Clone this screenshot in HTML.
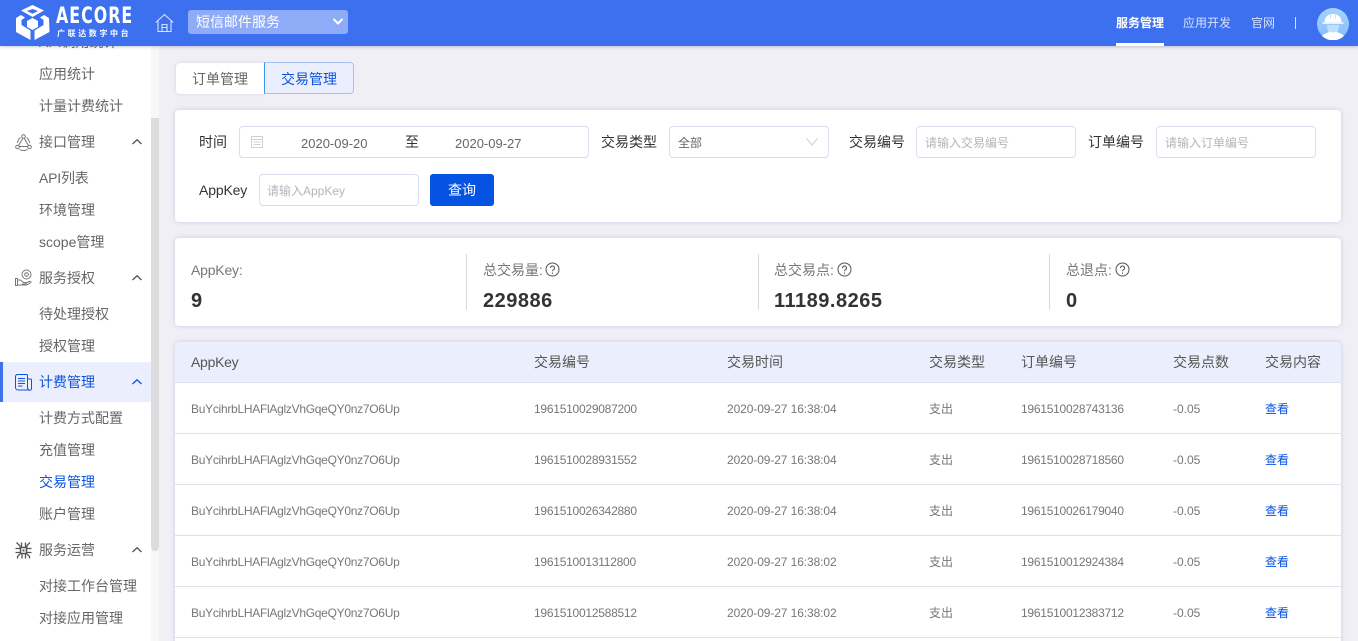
<!DOCTYPE html>
<html lang="zh"><head><meta charset="utf-8"><title>交易管理</title>
<style>
html,body{margin:0;padding:0;width:1358px;height:641px;overflow:hidden;background:#f0eff5}
body{position:relative;font-family:"Liberation Sans","Noto Sans CJK SC",sans-serif;font-size:14px;color:#666}
.a,.t{position:absolute}
.t{white-space:nowrap;line-height:20px}
.side{position:absolute;left:0;top:46px;width:151px;height:595px;background:#fff;overflow:hidden}
.m{position:absolute;left:39px;white-space:nowrap;line-height:20px;color:#666}
.card{position:absolute;background:#fff;border-radius:4px;box-shadow:0 0 4px rgba(140,145,210,.4)}
.inp{position:absolute;box-sizing:border-box;height:32px;border:1px solid #dcdcec;border-radius:4px;background:#fff;font-size:12px;color:#b4b4bc;line-height:32px;padding-left:8px;white-space:nowrap}
.lbl{position:absolute;white-space:nowrap;line-height:20px;color:#333;font-size:14px}
.h{position:absolute;top:352px;line-height:20px;color:#555;white-space:nowrap}
.c{position:absolute;font-size:12px;line-height:18px;color:#777;white-space:nowrap}
.ak{letter-spacing:-.28px}
.n{letter-spacing:-.25px}
.d{letter-spacing:-.1px}
.line{position:absolute;left:175px;width:1166px;height:1px;background:#e0e0ea}
.k{position:absolute;font-size:14px;line-height:20px;color:#777;white-space:nowrap;top:260px}
.v{position:absolute;font-size:20px;font-weight:bold;letter-spacing:.5px;line-height:26px;color:#333;white-space:nowrap;top:288px}
</style></head><body>

<!-- main cards -->
<div class="a" style="left:176px;top:63px;width:88px;height:31px;background:#fff;border-radius:4px 0 0 4px;box-shadow:0 0 3px rgba(140,145,210,.3);font-size:14px;line-height:32px;text-align:center;color:#666">订单管理</div>
<div class="a" style="left:264px;top:62px;width:90px;height:32px;box-sizing:border-box;background:#ebeefc;border:1px solid #a8c0f4;border-left-color:#3b95ee;border-radius:0 4px 4px 0;font-size:14px;line-height:32px;text-align:center;color:#0a55e0">交易管理</div>

<div class="card" style="left:175px;top:110px;width:1166px;height:112px"></div>
<div class="lbl" style="left:199px;top:132px">时间</div>
<div class="inp" style="left:239px;top:126px;width:350px"></div>
<svg class="a" style="left:250px;top:135px" width="14" height="14" viewBox="0 0 14 14" fill="none" stroke="#d0d0da"><rect x="1.500" y="1.500" width="11" height="11"/><path d="M1.500 4.500h11M3.500 7h7M3.500 9.500h7"/></svg>
<div class="t" style="left:301px;top:134px;font-size:13px;color:#666">2020-09-20</div>
<div class="lbl" style="left:405px;top:132px">至</div>
<div class="t" style="left:455px;top:134px;font-size:13px;color:#666">2020-09-27</div>
<div class="lbl" style="left:601px;top:132px">交易类型</div>
<div class="inp" style="left:669px;top:126px;width:160px;color:#666">全部</div>
<svg class="a" style="left:805px;top:137px" width="14" height="10" viewBox="0 0 14 10" fill="none" stroke="#cfcfd8"><path d="M1.500 1.500L7 8l5.500-6.500"/></svg>
<div class="lbl" style="left:849px;top:132px">交易编号</div>
<div class="inp" style="left:916px;top:126px;width:160px">请输入交易编号</div>
<div class="lbl" style="left:1088px;top:132px">订单编号</div>
<div class="inp" style="left:1156px;top:126px;width:160px">请输入订单编号</div>
<div class="lbl" style="left:199px;top:180px;letter-spacing:-.15px">AppKey</div>
<div class="inp" style="left:259px;top:174px;width:160px;padding-left:7px">请输入AppKey</div>
<div class="a" style="left:430px;top:174px;width:64px;height:32px;background:#0553e2;border-radius:3px;color:#fff;text-align:center;line-height:32px">查询</div>

<div class="card" style="left:175px;top:238px;width:1166px;height:88px"></div>
<div class="k" style="left:191px;letter-spacing:-.2px">AppKey:</div><div class="v" style="left:191px">9</div>
<div class="a" style="left:466px;top:254px;width:1px;height:56px;background:#d8d8de"></div>
<div class="k" style="left:483px">总交易量:</div><div class="v" style="left:483px">229886</div>
<div class="a" style="left:758px;top:254px;width:1px;height:56px;background:#d8d8de"></div>
<div class="k" style="left:774px">总交易点:</div><div class="v" style="left:774px">11189.8265</div>
<div class="a" style="left:1049px;top:254px;width:1px;height:56px;background:#d8d8de"></div>
<div class="k" style="left:1066px">总退点:</div><div class="v" style="left:1066px">0</div>
<svg class="a" style="left:545px;top:262px" width="15" height="15" viewBox="0 0 15 15" fill="none" stroke="#555"><circle cx="7.500" cy="7.500" r="6.500"/><path d="M5.500 6a2 2 0 1 1 3 1.700c-.7.400-1 .8-1 1.600M7.500 10.500v1.200"/></svg>
<svg class="a" style="left:837px;top:262px" width="15" height="15" viewBox="0 0 15 15" fill="none" stroke="#555"><circle cx="7.500" cy="7.500" r="6.500"/><path d="M5.500 6a2 2 0 1 1 3 1.700c-.7.400-1 .8-1 1.600M7.500 10.500v1.200"/></svg>
<svg class="a" style="left:1115px;top:262px" width="15" height="15" viewBox="0 0 15 15" fill="none" stroke="#555"><circle cx="7.500" cy="7.500" r="6.500"/><path d="M5.500 6a2 2 0 1 1 3 1.700c-.7.400-1 .8-1 1.600M7.500 10.500v1.200"/></svg>

<div class="card" style="left:175px;top:342px;width:1166px;height:310px"></div>
<div class="a" style="left:175px;top:342px;width:1166px;height:40px;background:#ebeefc;border-radius:4px 4px 0 0"></div>
<div class="h ak" style="left:191px">AppKey</div><div class="h" style="left:534px">交易编号</div><div class="h" style="left:727px">交易时间</div><div class="h" style="left:929px">交易类型</div><div class="h" style="left:1021px">订单编号</div><div class="h" style="left:1173px">交易点数</div><div class="h" style="left:1265px">交易内容</div>
<div class="line" style="top:382px"></div><div class="line" style="top:433px"></div><div class="line" style="top:484px"></div><div class="line" style="top:535px"></div><div class="line" style="top:586px"></div><div class="line" style="top:637px"></div>

<div class="c ak" style="left:191px;top:400px">BuYcihrbLHAFlAglzVhGqeQY0nz7O6Up</div><div class="c n" style="left:534px;top:400px">1961510029087200</div><div class="c d" style="left:727px;top:400px">2020-09-27 16:38:04</div><div class="c" style="left:929px;top:400px">支出</div><div class="c n" style="left:1021px;top:400px">1961510028743136</div><div class="c" style="left:1173px;top:400px">-0.05</div><div class="c" style="left:1265px;top:400px;color:#0553e2">查看</div>
<div class="c ak" style="left:191px;top:451px">BuYcihrbLHAFlAglzVhGqeQY0nz7O6Up</div><div class="c n" style="left:534px;top:451px">1961510028931552</div><div class="c d" style="left:727px;top:451px">2020-09-27 16:38:04</div><div class="c" style="left:929px;top:451px">支出</div><div class="c n" style="left:1021px;top:451px">1961510028718560</div><div class="c" style="left:1173px;top:451px">-0.05</div><div class="c" style="left:1265px;top:451px;color:#0553e2">查看</div>
<div class="c ak" style="left:191px;top:502px">BuYcihrbLHAFlAglzVhGqeQY0nz7O6Up</div><div class="c n" style="left:534px;top:502px">1961510026342880</div><div class="c d" style="left:727px;top:502px">2020-09-27 16:38:04</div><div class="c" style="left:929px;top:502px">支出</div><div class="c n" style="left:1021px;top:502px">1961510026179040</div><div class="c" style="left:1173px;top:502px">-0.05</div><div class="c" style="left:1265px;top:502px;color:#0553e2">查看</div>
<div class="c ak" style="left:191px;top:553px">BuYcihrbLHAFlAglzVhGqeQY0nz7O6Up</div><div class="c n" style="left:534px;top:553px">1961510013112800</div><div class="c d" style="left:727px;top:553px">2020-09-27 16:38:02</div><div class="c" style="left:929px;top:553px">支出</div><div class="c n" style="left:1021px;top:553px">1961510012924384</div><div class="c" style="left:1173px;top:553px">-0.05</div><div class="c" style="left:1265px;top:553px;color:#0553e2">查看</div>
<div class="c ak" style="left:191px;top:604px">BuYcihrbLHAFlAglzVhGqeQY0nz7O6Up</div><div class="c n" style="left:534px;top:604px">1961510012588512</div><div class="c d" style="left:727px;top:604px">2020-09-27 16:38:02</div><div class="c" style="left:929px;top:604px">支出</div><div class="c n" style="left:1021px;top:604px">1961510012383712</div><div class="c" style="left:1173px;top:604px">-0.05</div><div class="c" style="left:1265px;top:604px;color:#0553e2">查看</div>

<!-- sidebar -->
<div class="side">
<div class="m" style="top:-14px">API调用统计</div>
<div class="m" style="top:18px">应用统计</div>
<div class="m" style="top:50px">计量计费统计</div>
<div class="m" style="top:86px">接口管理</div>
<div class="m" style="top:122px;letter-spacing:-.2px">API列表</div>
<div class="m" style="top:154px">环境管理</div>
<div class="m" style="top:186px">scope管理</div>
<div class="m" style="top:222px">服务授权</div>
<div class="m" style="top:258px">待处理授权</div>
<div class="m" style="top:290px">授权管理</div>
<div class="a" style="left:0;top:316px;width:151px;height:40px;background:#ebeefc"></div>
<div class="a" style="left:0;top:316px;width:3px;height:40px;background:#3e72ef"></div>
<div class="m" style="top:326px;color:#0a55e0">计费管理</div>
<div class="m" style="top:362px">计费方式配置</div>
<div class="m" style="top:394px">充值管理</div>
<div class="m" style="top:426px;color:#0a55e0">交易管理</div>
<div class="m" style="top:458px">账户管理</div>
<div class="m" style="top:494px">服务运营</div>
<div class="m" style="top:530px">对接工作台管理</div>
<div class="m" style="top:562px">对接应用管理</div>
<svg class="a" style="left:131px;top:92px" width="12" height="8" viewBox="0 0 12 8" fill="none" stroke="#555" stroke-width="1.300"><path d="M1.500 6L6 1.800 10.500 6"/></svg>
<svg class="a" style="left:131px;top:228px" width="12" height="8" viewBox="0 0 12 8" fill="none" stroke="#555" stroke-width="1.300"><path d="M1.500 6L6 1.800 10.500 6"/></svg>
<svg class="a" style="left:131px;top:332px" width="12" height="8" viewBox="0 0 12 8" fill="none" stroke="#0a55e0" stroke-width="1.300"><path d="M1.500 6L6 1.800 10.500 6"/></svg>
<svg class="a" style="left:131px;top:500px" width="12" height="8" viewBox="0 0 12 8" fill="none" stroke="#555" stroke-width="1.300"><path d="M1.500 6L6 1.800 10.500 6"/></svg>
<svg class="a" style="left:15px;top:88px" width="17" height="17" viewBox="0 0 17 17" fill="none" stroke="#777"><path d="M8.500 3L3 12.500h11z"/><circle cx="8.500" cy="2.500" r="1.800" fill="#fff"/><circle cx="2.500" cy="13" r="1.800" fill="#fff"/><circle cx="14.500" cy="13" r="1.800" fill="#fff"/><path d="M2.500 9a7 7 0 0 1 3-5.500M14.500 9a7 7 0 0 0-3-5.500M4.500 15.500a8 8 0 0 0 8 0"/></svg>
<svg class="a" style="left:15px;top:223px" width="17" height="18" viewBox="0 0 17 18" fill="none" stroke="#777"><circle cx="11.500" cy="5.500" r="4.500"/><circle cx="11.500" cy="5.500" r="1.800"/><path d="M.5 9.500h2v7h-2zM2.500 11h3l3 2.500h2c1 0 1 1.500 0 1.500H7M2.500 16h9l4.500-2.500c0-1-1-1.500-2-1l-3 1.500"/></svg>
<svg class="a" style="left:15px;top:328px" width="17" height="17" viewBox="0 0 17 17" fill="none" stroke="#0a55e0"><path d="M2.500.5h9a1 1 0 0 1 1 1V13a3 3 0 0 0 1.500 3H3a2.500 2.500 0 0 1-2.500-2.500v-11a2 2 0 0 1 2-2zM12.500 5h3a1 1 0 0 1 1 1v8.500a1.700 1.700 0 0 1-3.500 0"/><path d="M3 4.500h7M3 7h7M3 9.500h7M3 12h4.500"/></svg>
<svg class="a" style="left:15px;top:496px" width="17" height="17" viewBox="0 0 17 17" fill="none" stroke="#555" stroke-width="1.300"><rect x="5.500" y="5.500" width="6" height="6" stroke-width="1.500"/><rect x="7.500" y="7.500" width="2" height="2" fill="#555" stroke="none"/><path d="M1.500.5L5 4v1.500M6.500.5V5M10.500.5V5M12 5.500V3.500L15 .5M16.500 6.500H12M16.500 10.500H12M.5 6.500H5M.5 10.500H5M5 12l-2.500 2.500v2M7 12v4.500M10.500 12v4.500M12 12l2.500 2.500v2"/></svg>
</div>
<div class="a" style="left:151px;top:46px;width:8px;height:595px;background:#f7f7f9"></div>
<div class="a" style="left:151px;top:118px;width:8px;height:433px;background:#dcdcdf;border-radius:0 0 4px 4px"></div>

<!-- header -->
<div class="a" style="left:0;top:0;width:1358px;height:46px;background:#3c70ef;box-shadow:0 1px 3px rgba(80,80,120,.3)"></div>
<svg class="a" style="left:15px;top:4px" width="35" height="37" viewBox="0 0 35 37" fill="#fff"><path d="M17.500 1L29 6.500 17.500 13 6 6.500zM17.500 5L12 7l5.500 2.800L23 7z" fill-rule="evenodd"/><path d="M17.500 14l5.500 3v6l-5.500 3-5.500-3v-6z"/><path d="M1 14l5-3 4 2.500-3.500 2.500v5l9 5.500V36L1 28zM34 14l-5-3-4 2.500 3.500 2.500v5l-9 5.500V36l15-8z"/></svg>
<div class="t" style="left:56px;top:4px;font-size:22px;font-weight:bold;line-height:26px;color:#fff;letter-spacing:1.400px;font-family:'DejaVu Sans',sans-serif;transform:scaleX(.72);transform-origin:0 0">AECORE</div>
<div class="t" style="left:57px;top:29px;font-size:8px;line-height:10px;color:#fff;letter-spacing:2.600px;font-weight:bold">广联达数字中台</div>
<svg class="a" style="left:155px;top:13px" width="19" height="20" viewBox="0 0 19 20" fill="none" stroke="#d8e2fb" stroke-width="1.100"><path d="M.8 9.500L9.500 1.500l8.700 8M3 8v10.500h13V8M7 18.500v-7h5v7M7 14.500h5"/></svg>
<div class="a" style="left:188px;top:10px;width:160px;height:24px;background:#8eabf8;border-radius:3px"></div>
<div class="t" style="left:196px;top:12px;color:#fff;font-size:14px">短信邮件服务</div>
<svg class="a" style="left:332px;top:17px" width="12" height="9" viewBox="0 0 12 9" fill="none" stroke="#fff" stroke-width="2"><path d="M1.500 2L6 6.500 10.500 2"/></svg>
<div class="t" style="left:1116px;top:13px;font-size:12px;color:#fff;font-weight:bold">服务管理</div>
<div class="a" style="left:1116px;top:43px;width:48px;height:3px;background:#fff"></div>
<div class="t" style="left:1183px;top:13px;font-size:12px;color:#d6e0fb">应用开发</div>
<div class="t" style="left:1251px;top:13px;font-size:12px;color:#d6e0fb">官网</div>
<div class="a" style="left:1295px;top:17px;width:1px;height:12px;background:#d6e0fb"></div>
<svg class="a" style="left:1317px;top:8px" width="32" height="32" viewBox="0 0 32 32"><defs><linearGradient id="g" x1="0" y1="0" x2="0" y2="1"><stop offset="0" stop-color="#a8d4fd"/><stop offset="1" stop-color="#82bcfb"/></linearGradient></defs><circle cx="16" cy="16" r="16" fill="url(#g)"/><path d="M7.500 14c0-5 3.500-8 8.500-8s8.500 3 8.500 8z" fill="#fff"/><path d="M13.500 6.500v4M18.500 6.500v4" stroke="#c8e2fd" stroke-width="1"/><rect x="5.500" y="14" width="21" height="2" fill="#e6f2fe"/><path d="M10 17h12c0 5-2 8-3.500 9h-5C12 25 10 22 10 17z" fill="#bfe0fd"/><path d="M5 28c1.500-2.500 6-3 8-4.500 2 1.500 4 1.500 6 0 2 1.500 6.500 2 8 4.500a16 16 0 0 1-22 0z" fill="#fff"/></svg>
</body></html>
